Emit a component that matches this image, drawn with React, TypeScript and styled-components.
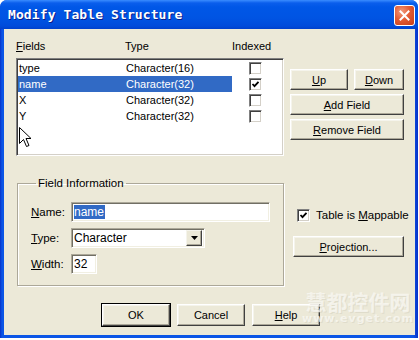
import React from 'react';
import styled, { createGlobalStyle } from 'styled-components';

const GlobalStyle = createGlobalStyle`
  body {
    margin: 0;
    background: #ffffff;
    font-family: "Liberation Sans", Arial, sans-serif;
    font-size: 11px;
    color: #000000;
  }
`;

const Window = styled.div`
  width: 418px;
  height: 338px;
  display: flex;
  flex-direction: column;
  border-radius: 7px 7px 0 0;
  overflow: hidden;
  background: #0A46D8;
`;

const TitleBar = styled.div`
  height: 29px;
  flex: none;
  display: flex;
  align-items: center;
  justify-content: space-between;
  padding: 0 3px 0 8px;
  background: linear-gradient(#3A8CFF 0, #0A5EEC 3px, #0057E7 7px, #0054E3 18px, #004BDB 26px, #0040CC 29px);
`;

const Title = styled.div`
  font-family: "DejaVu Sans Mono", "Liberation Mono", monospace;
  font-weight: bold;
  font-size: 13px;
  color: #ffffff;
  letter-spacing: 0.1px;
  text-shadow: 1px 1px 0 #0A1E8C;
`;

const CloseButton = styled.div`
  width: 19px;
  height: 19px;
  margin-top: 1px;
  border: 1px solid #ffffff;
  border-radius: 3px;
  background: radial-gradient(circle at 35% 30%, #F29A7C 0, #E35B34 45%, #C63B16 100%);
  display: flex;
  align-items: center;
  justify-content: center;
`;

const Frame = styled.div`
  flex: 1;
  display: flex;
  padding: 0 3px 3px 4px;
  background: linear-gradient(90deg, #0831C8 0, #0B55E6 2px, #0B55E6 413px, #0831C8 418px);
`;

const Content = styled.div`
  flex: 1;
  min-width: 0;
  position: relative;
  background: #ECE9D8;
  padding: 11px 11px 0 12px;
  display: flex;
  flex-direction: column;
`;

const Row = styled.div<{ $gap?: number }>`
  display: flex;
  gap: ${p => p.$gap ?? 0}px;
`;

const Column = styled.div<{ $top?: number; $gap?: number }>`
  display: flex;
  flex-direction: column;
  flex: none;
  padding-top: ${p => p.$top ?? 0}px;
  gap: ${p => p.$gap ?? 0}px;
`;

const HeaderRow = styled.div`
  display: grid;
  grid-template-columns: 109px 107px 52px;
  height: 13px;
  line-height: 13px;
  margin-bottom: 5px;
`;

const ListBox = styled.div`
  position: relative;
  width: 268px;
  height: 98px;
  box-sizing: border-box;
  background: #ffffff;
  border-top: 1px solid #808080;
  border-left: 1px solid #808080;
  border-right: 1px solid #ffffff;
  border-bottom: 1px solid #ffffff;
  box-shadow: inset 1px 1px 0 #404040, inset -1px -1px 0 #D4D0C8;
  padding: 1px 0 0 1px;
`;

const ListRow = styled.div`
  display: grid;
  grid-template-columns: 214px 17px 13px;
  height: 16px;
  align-items: center;
`;

const Cells = styled.div<{ $selected?: boolean }>`
  display: grid;
  grid-template-columns: 108px 1fr;
  height: 16px;
  line-height: 16px;
  background: ${p => (p.$selected ? '#316AC5' : 'transparent')};
  color: ${p => (p.$selected ? '#ffffff' : '#000000')};
  & > span:first-child { padding-left: 1px; }
`;

const CheckBox = styled.span`
  grid-column: 3;
  width: 13px;
  height: 13px;
  box-sizing: border-box;
  background: #ffffff;
  border-top: 1px solid #808080;
  border-left: 1px solid #808080;
  border-right: 1px solid #ffffff;
  border-bottom: 1px solid #ffffff;
  box-shadow: inset 1px 1px 0 #404040, inset -1px -1px 0 #D4D0C8;
  display: flex;
  align-items: center;
  justify-content: center;
  flex: none;
`;

const Cursor = styled.svg`
  position: absolute;
  left: 2px;
  top: 68px;
`;

const Button = styled.div<{ $w: number; $h?: number; $default?: boolean }>`
  width: ${p => p.$w}px;
  height: ${p => p.$h ?? 21}px;
  box-sizing: border-box;
  background: #ECE9D8;
  border-top: 1px solid #ffffff;
  border-left: 1px solid #ffffff;
  border-right: 1px solid #404040;
  border-bottom: 1px solid #404040;
  box-shadow: inset -1px -1px 0 #ACA899, inset 1px 1px 0 #F5F4EC;
  outline: ${p => (p.$default ? '1px solid #000000' : 'none')};
  display: flex;
  align-items: center;
  justify-content: center;
  font-size: 11px;
  flex: none;
`;

const GroupBox = styled.fieldset`
  flex: none;
  width: 267px;
  height: 109px;
  box-sizing: border-box;
  margin: 21px 0 0 1px;
  padding: 12px 0 0 13px;
  border: 1px solid #ACA899;
  box-shadow: inset 1px 1px 0 #ffffff, 1px 1px 0 #ffffff;
  display: flex;
  flex-direction: column;
  gap: 6px;
`;

const Legend = styled.legend`
  padding: 0 2px;
  margin-left: 5px;
  font-size: 11.5px;
  line-height: 13px;
`;

const FieldRow = styled.div`
  display: flex;
  align-items: center;
  height: 20px;
`;

const FieldLabel = styled.span`
  width: 40px;
  font-size: 11.5px;
`;

const Sunken = styled.div<{ $w: number }>`
  width: ${p => p.$w}px;
  height: 20px;
  box-sizing: border-box;
  background: #ffffff;
  border-top: 1px solid #ACA899;
  border-left: 1px solid #ACA899;
  border-right: 1px solid #ffffff;
  border-bottom: 1px solid #ffffff;
  box-shadow: inset 1px 1px 0 #716F64, inset -1px -1px 0 #F1EFE2;
  display: flex;
  align-items: center;
  padding: 0 2px 0 2px;
  font-size: 12px;
`;

const Selected = styled.span`
  background: #316AC5;
  color: #ffffff;
  line-height: 14px;
  padding: 0 1px 0 0;
`;

const DropButton = styled.div`
  margin-left: auto;
  width: 16px;
  height: 16px;
  box-sizing: border-box;
  background: #ECE9D8;
  border-top: 1px solid #F5F4EC;
  border-left: 1px solid #F5F4EC;
  border-right: 1px solid #404040;
  border-bottom: 1px solid #404040;
  box-shadow: inset -1px -1px 0 #ACA899;
  display: flex;
  align-items: center;
  justify-content: center;
`;

const SideColumn = styled.div`
  flex: none;
  display: flex;
  flex-direction: column;
  gap: 14px;
  padding: 52px 0 0 9px;
`;

const Mappable = styled.label`
  display: flex;
  align-items: center;
  gap: 6px;
  height: 14px;
  margin-left: 4px;
  font-size: 11.5px;
`;

const Footer = styled.div`
  display: flex;
  gap: 7px;
  padding: 18px 0 0 86px;
`;

const Watermark = styled.div`
  position: absolute;
  left: 298px;
  top: 260px;
  width: 112px;
  display: flex;
  flex-direction: column;
  align-items: center;
  color: rgba(250, 249, 244, 0.75);
  text-shadow: 1px 1px 0 rgba(200, 196, 180, 0.35);
  font-weight: bold;
  pointer-events: none;
`;

const WatermarkCn = styled.span`
  font-family: "Noto Sans CJK SC", sans-serif;
  font-size: 21px;
  line-height: 24px;
  white-space: nowrap;
`;

const WatermarkEn = styled.span`
  font-family: "DejaVu Sans", sans-serif;
  font-size: 11px;
  line-height: 12px;
  letter-spacing: 1px;
  white-space: nowrap;
`;

const Check = () => (
  <svg width="9" height="9" viewBox="0 0 9 9">
    <polyline points="1.5,4 3.5,6.2 7.5,1.8" fill="none" stroke="#000" strokeWidth="1.8" />
  </svg>
);

const fields = [
  { name: 'type', type: 'Character(16)', indexed: false },
  { name: 'name', type: 'Character(32)', indexed: true },
  { name: 'X', type: 'Character(32)', indexed: false },
  { name: 'Y', type: 'Character(32)', indexed: false },
];

const App = () => (
  <>
    <GlobalStyle />
    <Window>
      <TitleBar>
        <Title>Modify Table Structure</Title>
        <CloseButton>
          <svg width="11" height="11" viewBox="0 0 11 11">
            <path d="M1.5 1.5 L9.5 9.5 M9.5 1.5 L1.5 9.5" stroke="#fff" strokeWidth="2" strokeLinecap="square" />
          </svg>
        </CloseButton>
      </TitleBar>
      <Frame>
        <Content>
          <Row $gap={6}>
            <Column>
              <HeaderRow>
                <span><u>F</u>ields</span>
                <span>Type</span>
                <span>Indexed</span>
              </HeaderRow>
              <ListBox>
                {fields.map(f => (
                  <ListRow key={f.name}>
                    <Cells $selected={f.indexed}>
                      <span>{f.name}</span>
                      <span>{f.type}</span>
                    </Cells>
                    <CheckBox>{f.indexed && <Check />}</CheckBox>
                  </ListRow>
                ))}
                <Cursor width="13" height="21" viewBox="0 0 13 21">
                  <path d="M0.5 0.5 L0.5 16.5 L4.5 12.5 L7.5 19.5 L10 18.5 L7 11.5 L12 11.5 Z" fill="#fff" stroke="#000" strokeWidth="1" />
                </Cursor>
              </ListBox>
            </Column>
            <Column $top={29} $gap={4}>
              <Row $gap={6}>
                <Button $w={58}><u>U</u>p</Button>
                <Button $w={50}><u>D</u>own</Button>
              </Row>
              <Button $w={114}><u>A</u>dd Field</Button>
              <Button $w={114}><u>R</u>emove Field</Button>
            </Column>
          </Row>
          <Row>
            <GroupBox>
              <Legend>Field Information</Legend>
              <FieldRow>
                <FieldLabel><u>N</u>ame:</FieldLabel>
                <Sunken $w={199}><Selected>name</Selected></Sunken>
              </FieldRow>
              <FieldRow>
                <FieldLabel><u>T</u>ype:</FieldLabel>
                <Sunken $w={134}>
                  <span>Character</span>
                  <DropButton>
                    <svg width="7" height="4" viewBox="0 0 7 4"><path d="M0 0 H7 L3.5 4 Z" fill="#000" /></svg>
                  </DropButton>
                </Sunken>
              </FieldRow>
              <FieldRow>
                <FieldLabel><u>W</u>idth:</FieldLabel>
                <Sunken $w={26}>32</Sunken>
              </FieldRow>
            </GroupBox>
            <SideColumn>
              <Mappable>
                <CheckBox><Check /></CheckBox>
                <span>Table is <u>M</u>appable</span>
              </Mappable>
              <Button $w={111}><u>P</u>rojection...</Button>
            </SideColumn>
          </Row>
          <Footer>
            <Button $w={68} $h={22} $default>OK</Button>
            <Button $w={68} $h={22}>Cancel</Button>
            <Button $w={68} $h={22}><u>H</u>elp</Button>
          </Footer>
          <Watermark>
            <WatermarkCn>慧都控件网</WatermarkCn>
            <WatermarkEn>www.evget.com</WatermarkEn>
          </Watermark>
        </Content>
      </Frame>
    </Window>
  </>
);

export default App;
